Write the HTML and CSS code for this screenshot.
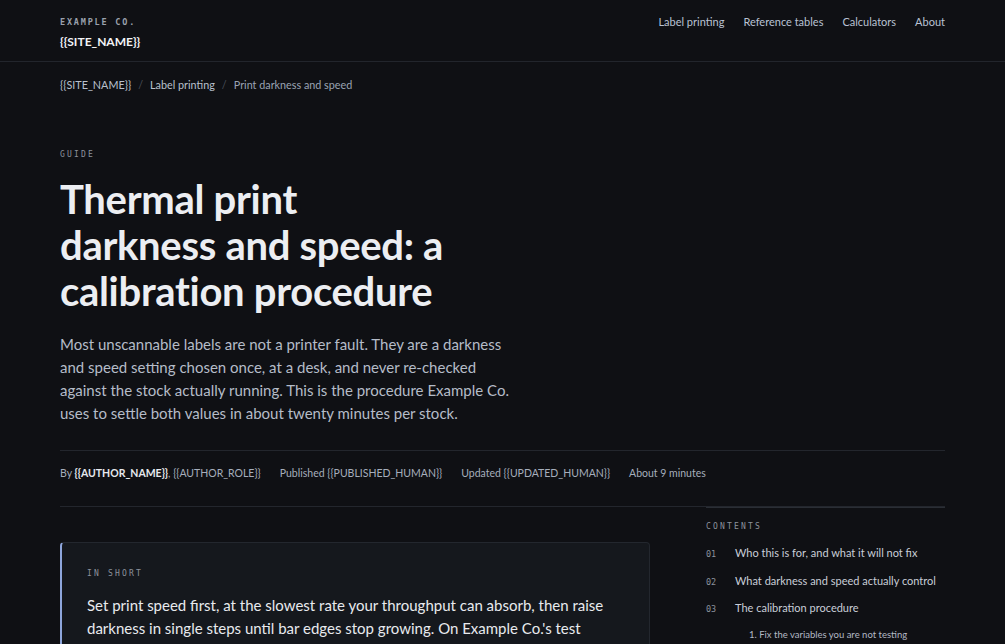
FILE: index.html
```html
<!DOCTYPE html>
<html lang="en">
<head>
<meta charset="utf-8">
<title>Thermal print darkness and speed: a calibration procedure</title>
<link rel="stylesheet" href="styles.css">
</head>
<body>
<header class="site-header">
  <div class="wrap header-inner">
    <a class="brand" href="#">
      <span class="brand-kicker">EXAMPLE CO.</span>
      <span class="brand-name">{{SITE_NAME}}</span>
    </a>
    <nav class="main-nav">
      <a href="#">Label printing</a>
      <a href="#">Reference tables</a>
      <a href="#">Calculators</a>
      <a href="#">About</a>
    </nav>
  </div>
</header>

<main class="wrap">
  <nav class="crumbs">
    <a href="#">{{SITE_NAME}}</a>
    <span class="sep">/</span>
    <a href="#">Label printing</a>
    <span class="sep">/</span>
    <span class="current">Print darkness and speed</span>
  </nav>

  <section class="hero">
    <p class="eyebrow">GUIDE</p>
    <h1 class="title">Thermal print darkness and speed: a calibration procedure</h1>
    <p class="lead">Most unscannable labels are not a printer fault. They are a darkness and speed setting chosen once, at a desk, and never re-checked against the stock actually running. This is the procedure Example Co. uses to settle both values in about twenty minutes per stock.</p>
  </section>

  <div class="meta">
    <span>By <strong>{{AUTHOR_NAME}}</strong>, {{AUTHOR_ROLE}}</span>
    <span>Published {{PUBLISHED_HUMAN}}</span>
    <span>Updated {{UPDATED_HUMAN}}</span>
    <span>About 9 minutes</span>
  </div>

  <div class="layout">
    <article class="article">
      <aside class="summary">
        <p class="eyebrow">IN SHORT</p>
        <p class="summary-text">Set print speed first, at the slowest rate your throughput can absorb, then raise darkness in single steps until bar edges stop growing. On Example Co.'s test bench, the stable window is often narrower than the printer's default settings suggest, so note the values for each stock.</p>
      </aside>
    </article>

    <aside class="toc">
      <p class="eyebrow">CONTENTS</p>
      <ol class="toc-list">
        <li><span class="num">01</span><a href="#">Who this is for, and what it will not fix</a></li>
        <li><span class="num">02</span><a href="#">What darkness and speed actually control</a></li>
        <li><span class="num">03</span><a href="#">The calibration procedure</a></li>
      </ol>
      <ol class="toc-sub">
        <li><a href="#">1. Fix the variables you are not testing</a></li>
        <li><a href="#">2. Find the speed ceiling</a></li>
      </ol>
    </aside>
  </div>
</main>
</body>
</html>
```

FILE: styles.css
```css
* { box-sizing: border-box; }

html, body {
  margin: 0;
  background: #0f1014;
  color: #e6e8ee;
  font-family: Lato, "Noto Sans", sans-serif;
}

a { color: inherit; text-decoration: none; }

.wrap {
  width: 885px;
  margin: 0 auto;
}

/* Header */
.site-header {
  border-bottom: 1px solid #22252c;
}

.header-inner {
  display: flex;
  justify-content: space-between;
  align-items: flex-start;
  height: 61px;
  padding-top: 16px;
}

.brand {
  display: flex;
  flex-direction: column;
  gap: 5px;
}

.brand-kicker {
  font-family: "DejaVu Sans Mono", monospace;
  font-size: 8.5px;
  font-weight: bold;
  letter-spacing: 1.8px;
  color: #9aa1ad;
  line-height: 13px;
}

.brand-name {
  font-size: 12px;
  font-weight: 700;
  color: #f2f3f6;
  line-height: 16px;
}

.main-nav {
  display: flex;
  gap: 19px;
  font-size: 11px;
  color: #b9c2d3;
  line-height: 12px;
}

/* Breadcrumbs */
.crumbs {
  display: flex;
  gap: 7px;
  padding-top: 15px;
  font-size: 10.8px;
  line-height: 16px;
  color: #b9c0cc;
}

.crumbs .sep { color: #4a4f59; }
.crumbs .current { color: #9aa3b3; }

/* Hero */
.eyebrow {
  margin: 0;
  font-family: "DejaVu Sans Mono", monospace;
  font-size: 8px;
  letter-spacing: 2.2px;
  color: #8c929c;
  line-height: 12px;
}

.hero {
  padding-top: 56px;
}

.title {
  margin: 15px 0 0;
  max-width: 395px;
  font-size: 40px;
  line-height: 46px;
  font-weight: 700;
  letter-spacing: -0.3px;
  color: #eceef2;
}

.lead {
  margin: 19px 0 0;
  max-width: 462px;
  font-size: 15px;
  line-height: 23px;
  color: #b5bcc8;
}

/* Meta row */
.meta {
  margin-top: 25px;
  display: flex;
  gap: 19px;
  padding: 15px 0 26px;
  line-height: 14px;
  border-top: 1px solid #23262d;
  border-bottom: 1px solid #23262d;
  font-size: 10.5px;
  color: #a6aebc;
}

.meta strong { color: #e6e8ee; }

/* Two-column body */
.layout {
  display: grid;
  grid-template-columns: 590px 239px;
  justify-content: space-between;
}

.summary {
  margin-top: 35px;
  background: #15181d;
  border: 1px solid #23272e;
  border-left: 2px solid #8ea6dc;
  border-radius: 4px;
  padding: 25px 25px;
}

.summary-text {
  margin: 14px 0 0;
  font-size: 15px;
  line-height: 23px;
  color: #e8eaee;
}

/* Table of contents */
.toc {
  border-top: 1px solid #2a2e35;
  padding-top: 13px;
}

.toc-list {
  list-style: none;
  margin: 13px 0 0;
  padding: 0;
}

.toc-list li {
  display: flex;
  align-items: baseline;
  gap: 18px;
  height: 27.5px;
  font-size: 11px;
  line-height: 14px;
  color: #c9ced8;
}

.toc-list .num {
  font-family: "DejaVu Sans Mono", monospace;
  font-size: 8.5px;
  color: #8c929c;
  width: 11px;
}

.toc-sub {
  list-style: none;
  margin: 0;
  padding: 0 0 0 43px;
  font-size: 9.5px;
  line-height: 12px;
  color: #b3b9c4;
}

.toc-sub li { height: 20px; }
```
